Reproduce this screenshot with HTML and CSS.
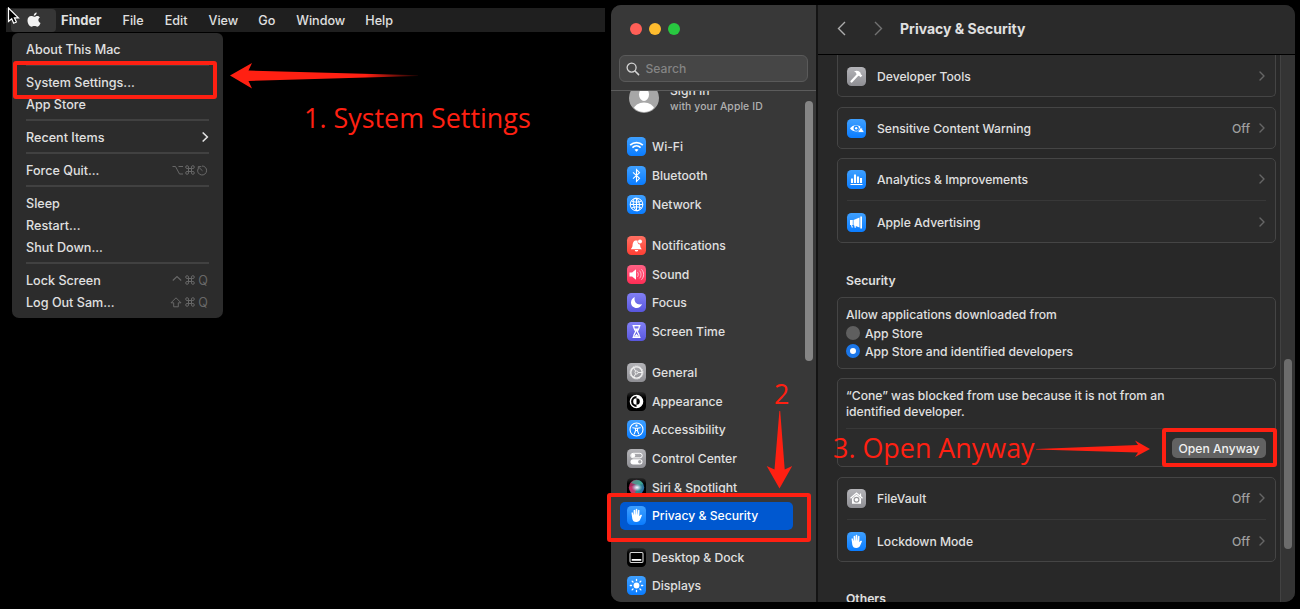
FILE: index.html
```html
<!DOCTYPE html>
<html lang="en">
<head>
<meta charset="utf-8">
<title>Open Anyway guide</title>
<link rel="stylesheet" href="styles.css">
</head>
<body>
<svg width="0" height="0" class="defs">
  <defs>
    <linearGradient id="fadeLeft" x1="0" x2="1" y1="0" y2="0"><stop offset=".72" stop-color="#ff2012"/><stop offset="1" stop-color="#ff2012" stop-opacity=".1"/></linearGradient>
    <symbol id="hand" viewBox="0 0 19 19"><path fill="#fff" d="M9.200 16c-2.200 0-3.600-1.300-3.900-3.300L4.500 7c-.1-1 1.100-1.200 1.400-.2l.7 2.500V4.600c0-1.100 1.500-1.100 1.600 0l.2 3.800h.2l.1-4.800c0-1.100 1.600-1.100 1.600 0l.1 4.800h.2l.4-3.900c.1-1.100 1.600-1 1.500.1l-.2 5.600 1-1.200c.8-.8 2.100-.2 1.500.8l-1.500 3.500c-.7 1.700-2 2.700-4.100 2.700z"/></symbol>
    <symbol id="chev" viewBox="0 0 6 10"><path d="M1 1l4 4-4 4" fill="none" stroke="currentColor" stroke-width="1.400" stroke-linecap="round" stroke-linejoin="round"/></symbol>
    <symbol id="cmd" viewBox="0 0 10 10"><path d="M3.500 3.500h3v3h-3zM3.500 3.500H2.100a1.400 1.400 0 1 1 1.400-1.400zM6.500 3.500V2.100a1.400 1.400 0 1 1 1.400 1.400zM6.500 6.500h1.400a1.400 1.400 0 1 1-1.400 1.400zM3.500 6.500v1.400a1.400 1.400 0 1 1-1.400-1.400z" fill="none" stroke="currentColor" stroke-width="1"/></symbol>
  </defs>
</svg>

<div class="stage">
  <div class="desktop">
    <header class="menubar">
      <div class="apple">
        <svg width="14" height="16" viewBox="0 0 14 16"><path fill="#f2f2f2" d="M9.700.5c.1 1.700-1.300 3.200-2.900 3.200C6.600 2.100 8.100.6 9.700.5zM12.900 5.500c-2.200 1.300-2 4.400.6 5.500-.5 1.500-1.700 3.700-3.100 3.700-1.100 0-1.600-.6-3-.6s-1.900.6-2.900.6C2.500 14.700.5 11.500.5 8.600c0-2.800 1.700-4.500 3.700-4.500 1.200 0 2.100.7 3 .7.8 0 1.900-.8 3.300-.8 1 0 1.900.6 2.400 1.500z"/></svg>
      </div>
      <span class="mb finder">Finder</span><span class="mb">File</span><span class="mb">Edit</span><span class="mb view">View</span><span class="mb">Go</span><span class="mb window-m">Window</span><span class="mb">Help</span>
    </header>
    <nav class="menu">
      <div class="item">About This Mac</div>
      <div class="sep"></div>
      <div class="item">System Settings...</div>
      <div class="item">App Store</div>
      <div class="sep"></div>
      <div class="item">Recent Items<svg class="sub" width="7" height="10"><path d="M1.200 1l4.200 4-4.200 4" fill="none" stroke="#e0e0e0" stroke-width="1.700" stroke-linecap="round" stroke-linejoin="round"/></svg></div>
      <div class="sep"></div>
      <div class="item">Force Quit...<span class="keys"><svg width="11" height="10"><path d="M.5 1.500h3l4 7.500H11M6.500 1.500H11" fill="none" stroke="currentColor"/></svg><svg width="10" height="10"><use href="#cmd"/></svg><svg width="11" height="11"><path d="M5 1a4.500 4.500 0 1 1-4.200 3.200M5.500 5.800L1.500 2M1.300 4.500V1.600h3" fill="none" stroke="currentColor"/></svg></span></div>
      <div class="sep"></div>
      <div class="item">Sleep</div>
      <div class="item">Restart...</div>
      <div class="item">Shut Down...</div>
      <div class="sep"></div>
      <div class="item">Lock Screen<span class="keys wide"><svg width="10" height="10"><path d="M.8 5.500l4.200-4 4.200 4" fill="none" stroke="currentColor" stroke-width="1.100"/></svg><svg width="10" height="10"><use href="#cmd"/></svg><span>Q</span></span></div>
      <div class="item">Log Out Sam...<span class="keys wide"><svg width="12" height="11"><path d="M6 .8l5 5H8.300v4H3.700v-4H1z" fill="none" stroke="currentColor" stroke-linejoin="round"/></svg><svg width="10" height="10"><use href="#cmd"/></svg><span>Q</span></span></div>
    </nav>
  </div>

  <div class="window">
    <aside class="sidebar">
      <div class="side-head">
        <div class="lights"><i class="red"></i><i class="yellow"></i><i class="green"></i></div>
        <div class="search"><svg width="14" height="14"><circle cx="5.600" cy="5.600" r="4.500" fill="none" stroke="#d4d4d4" stroke-width="1.300"/><path d="M9 9l3.600 3.600" stroke="#d4d4d4" stroke-width="1.500" stroke-linecap="round"/></svg><span>Search</span></div>
      </div>
      <div class="side-list">
        <div class="account">
          <svg width="30" height="30"><defs><clipPath id="av"><circle cx="15" cy="15" r="14"/></clipPath></defs><circle cx="15" cy="15" r="15" fill="#a7a7a7"/><g clip-path="url(#av)" fill="#fff"><ellipse cx="15" cy="11.500" rx="5" ry="6.500"/><ellipse cx="15" cy="26" rx="10" ry="6.500"/></g></svg>
          <div><div class="signin">Sign In</div><div class="with-id">with your Apple ID</div></div>
        </div>
        <div class="group">
          <div class="row"><svg class="ic blue" viewBox="0 0 19 19"><g fill="none" stroke="#fff" stroke-width="1.700"><path d="M3.200 8.200c3.600-3.400 9-3.400 12.600 0M5.400 10.600c2.400-2.200 5.800-2.200 8.200 0"/></g><path d="M7.500 12.700c1.200-1 2.800-1 4 0l-2 2z" fill="#fff"/></svg>Wi-Fi</div>
          <div class="row"><svg class="ic blue" viewBox="0 0 19 19"><path d="M6 6.300l6.500 6-3 3V3.700l3 3-6.500 6" fill="none" stroke="#fff" stroke-width="1.100"/></svg>Bluetooth</div>
          <div class="row"><svg class="ic blue" viewBox="0 0 19 19"><g fill="none" stroke="#fff" stroke-width="1"><circle cx="9.500" cy="9.500" r="6.300"/><ellipse cx="9.500" cy="9.500" rx="3" ry="6.300" transform="rotate(-12 9.500 9.500)"/><path d="M3.200 9.500h12.600M4.500 6c3 1.500 7 1.500 10 0M4.500 13c3-1.500 7-1.500 10 0M9.500 3.200v12.600"/></g></svg>Network</div>
        </div>
        <div class="group">
          <div class="row"><svg class="ic coral" viewBox="0 0 19 19"><path fill="#fff" d="M4 13.200c0-.8 1.300-1.500 1.500-3.200C5.700 6.500 6.500 4.500 9.500 4.500c.5 0 .8 0 1.200.2A2.900 2.900 0 0 0 13 8.500c.3 3 .7 3.500 2 4.700zM7.800 14h3.400c-.2 2-3.200 2-3.400 0z"/><circle cx="13" cy="5.500" r="2" fill="#fff"/></svg>Notifications</div>
          <div class="row"><svg class="ic pink" viewBox="0 0 19 19"><path fill="#fff" d="M2.500 7.500h2.600L9 4.300v10.400l-3.900-3.200H2.500z"/><path d="M10.500 7.200c1 1.200 1 3.400 0 4.600M12.500 5.700c2 2 2 5.600 0 7.600M14.500 4.300c2.800 3 2.800 7.400 0 10.400" fill="none" stroke="#ffd0dc" stroke-width=".9"/></svg>Sound</div>
          <div class="row"><svg class="ic indigo" viewBox="0 0 19 19"><path fill="#fff" d="M7.700 4c-1 5 2 8.200 7.300 7.300-1 2.400-3 3.700-5.300 3.700C6.500 15 4 12.700 4 9.500 4 7 5.500 4.900 7.700 4z"/></svg>Focus</div>
          <div class="row"><svg class="ic indigo" viewBox="0 0 19 19"><path d="M5.500 3.700h8M5.500 15.300h8M6.700 4c0 3.500 1.200 3.500 2 5.500-.8 2-2 2-2 5.500M12.300 4c0 3.500-1.200 3.500-2 5.500.8 2 2 2 2 5.500" fill="none" stroke="#fff" stroke-width="1.300"/><path d="M7.500 6.500h4l-2 3zM7.200 14.700l2.300-3 2.300 3z" fill="#fff"/></svg>Screen Time</div>
        </div>
        <div class="group">
          <div class="row"><svg class="ic gray" viewBox="0 0 19 19"><g fill="none" stroke="#f2f2f2"><circle cx="9.500" cy="9.500" r="5.700" stroke-width="1.300"/><circle cx="9.500" cy="9.500" r="6.500" stroke-width="1" stroke-dasharray="1 1"/><circle cx="9.500" cy="9.500" r="1.500"/><path d="M11 9.500h4M8.700 8.200L6.600 4.700M8.700 10.800l-2.100 3.500"/></g></svg>General</div>
          <div class="row"><svg class="ic black" viewBox="0 0 19 19"><circle cx="9.500" cy="9.500" r="6.100" fill="none" stroke="#fff" stroke-width="1.400"/><path d="M9.500 3.500a6 6 0 0 1 0 12v-2.700a3.300 3.300 0 0 0 0-6.600z" fill="#fff"/><path d="M9.500 6.200a3.300 3.300 0 0 0 0 6.600z" fill="#fff"/></svg>Appearance</div>
          <div class="row"><svg class="ic blue" viewBox="0 0 19 19"><circle cx="9.500" cy="9.500" r="6.500" fill="none" stroke="#fff" stroke-width="1.100"/><circle cx="9.500" cy="5.700" r="1.100" fill="#fff"/><path d="M5.800 7.700l2.500.6h2.400l2.500-.6M8.500 8.300v2.500l-1.200 3.100M10.500 8.300v2.500l1.200 3.100M8.500 10.500h2" fill="none" stroke="#fff" stroke-width="1.100" stroke-linecap="round"/></svg>Accessibility</div>
          <div class="row"><svg class="ic gray" viewBox="0 0 19 19"><rect x="3.800" y="4.300" width="11.400" height="4.600" rx="2.300" fill="none" stroke="#fff"/><circle cx="6.200" cy="6.600" r="2" fill="#fff"/><rect x="3.500" y="10.200" width="12" height="5.200" rx="2.600" fill="#fff"/><circle cx="12.800" cy="12.800" r="1.700" fill="#a5a5a8"/></svg>Control Center</div>
          <div class="row"><svg class="ic black" viewBox="0 0 19 19"><defs><radialGradient id="siri"><stop offset="0" stop-color="#fff"/><stop offset=".4" stop-color="#c9d3ea" stop-opacity=".8"/><stop offset="1" stop-color="#7cc0d0" stop-opacity="0"/></radialGradient><linearGradient id="orb" x1="0" x2="1" y1=".3" y2=".7"><stop offset="0" stop-color="#b8204f"/><stop offset=".35" stop-color="#8a3f70"/><stop offset=".6" stop-color="#2f8f86"/><stop offset="1" stop-color="#2a62a8"/></linearGradient></defs><circle cx="9.500" cy="9.500" r="7.700" fill="url(#orb)"/><path d="M4 5c3-4 9-4 12 1l-5 1z" fill="#45a894" opacity=".8"/><path d="M2.500 9c3-2 5-1 7 2l-2 5C4 15 2 12 2.500 9z" fill="#e0336b" opacity=".7"/><ellipse cx="10" cy="9.500" rx="5.500" ry="4" fill="url(#siri)"/></svg>Siri &amp; Spotlight</div>
          <div class="row selected"><svg class="ic blue" viewBox="0 0 19 19"><use href="#hand"/></svg>Privacy &amp; Security</div>
        </div>
        <div class="group">
          <div class="row"><svg class="ic black" viewBox="0 0 19 19"><rect x="3" y="4.500" width="13" height="10" rx="1.200" fill="none" stroke="#d8d8d8" stroke-width="1.100"/><rect x="4.700" y="11" width="9.600" height="1.800" fill="#fff"/></svg>Desktop &amp; Dock</div>
          <div class="row"><svg class="ic blue" viewBox="0 0 19 19"><circle cx="9.500" cy="9.500" r="2.900" fill="#fff"/><g stroke="#fff" stroke-width="1.300" stroke-linecap="round"><path d="M9.500 3.300v1.200M9.500 14.500v1.200M3.300 9.500h1.200M14.500 9.500h1.200M5.100 5.100l.9.900M13 13l.9.900M5.100 13.900L6 13M13 6l.9-.9"/></g></svg>Displays</div>
        </div>
        <div class="side-thumb"></div>
      </div>
    </aside>

    <main class="main">
      <div class="titlebar">
        <svg width="9" height="15"><path d="M8 1L1.500 7.500 8 14" fill="none" stroke="#adadad" stroke-width="1.400"/></svg>
        <svg class="fwd" width="9" height="15"><path d="M1 1l6.500 6.500L1 14" fill="none" stroke="#727272" stroke-width="1.400"/></svg>
        <h1>Privacy &amp; Security</h1>
      </div>
      <div class="body">
        <div class="content">
          <section class="card first"><div class="line"><svg class="ic gray" viewBox="0 0 19 19"><path d="M4.500 14.500l6.500-7" stroke="#fff" stroke-width="2.200" stroke-linecap="round"/><path d="M7 4.500c3-1.500 5-.5 6.500 1.300l.3 1.400 1.500 1.300-1.600 1.800-1.700-1.600-1.200-.2-1.500-1.500c.2-1.200-.6-2-2.300-2.500z" fill="#fff"/></svg><span>Developer Tools</span><svg class="chev" viewBox="0 0 6 10"><use href="#chev"/></svg></div></section>
          <section class="card tight"><div class="line"><svg class="ic blue" viewBox="0 0 19 19"><path d="M3 9.500C5.500 5 12.500 5 15.500 9.500c-3 4-9.500 4-12.500 0z" fill="#fff"/><circle cx="9.200" cy="9.200" r="2.600" fill="#1687ff"/><circle cx="9.200" cy="9.200" r="1.200" fill="#fff"/><path d="M14 7.800l3.500 5.700h-7z" fill="#fff" stroke="#1687ff" stroke-width=".8"/></svg><span>Sensitive Content Warning</span><em>Off</em><svg class="chev" viewBox="0 0 6 10"><use href="#chev"/></svg></div></section>
          <section class="card">
            <div class="line"><svg class="ic blue" viewBox="0 0 19 19"><path d="M3.500 14.500h12" stroke="#fff" stroke-width="1.200"/><path d="M5 13V8.500M8 13V4.500M11 13V6.500M14 13V8" stroke="#fff" stroke-width="2.100"/></svg><span>Analytics &amp; Improvements</span><svg class="chev" viewBox="0 0 6 10"><use href="#chev"/></svg></div>
            <hr>
            <div class="line"><svg class="ic blue" viewBox="0 0 19 19"><path fill="#fff" d="M3 7h2.800v5H5l1 2.500H4.700L4 12H3zM6.500 7l6-2.500v10L8.700 13l.3 1.500-1.200.5-.6-2.400-.7-.5zM13.300 3.500h1.700v12h-1.700z"/></svg><span>Apple Advertising</span><svg class="chev" viewBox="0 0 6 10"><use href="#chev"/></svg></div>
          </section>
          <h2>Security</h2>
          <section class="card allow">
            <p>Allow applications downloaded from</p>
            <div class="radio"><i></i>App Store</div>
            <div class="radio on"><i></i>App Store and identified developers</div>
          </section>
          <section class="card blocked">
            <p>“Cone” was blocked from use because it is not from an<br>identified developer.</p>
            <hr>
            <div class="action"><button>Open Anyway</button></div>
          </section>
          <section class="card">
            <div class="line"><svg class="ic gray" viewBox="0 0 19 19"><path d="M3.500 9.300l6-5.300 6 5.300M13.500 4.500v3" fill="none" stroke="#fff" stroke-width="1.200"/><path d="M5 9.500l4.500-4 4.500 4v5.300H5z" fill="#fff"/><circle cx="9.500" cy="10.700" r="2.400" fill="none" stroke="#99999c" stroke-width="1.200"/></svg><span>FileVault</span><em>Off</em><svg class="chev" viewBox="0 0 6 10"><use href="#chev"/></svg></div>
            <hr>
            <div class="line"><svg class="ic blue" viewBox="0 0 19 19"><use href="#hand"/></svg><span>Lockdown Mode</span><em>Off</em><svg class="chev" viewBox="0 0 6 10"><use href="#chev"/></svg></div>
          </section>
          <h2 class="others">Others</h2>
        </div>
        <div class="track"><div class="thumb"></div></div>
      </div>
    </main>
  </div>

  <svg class="overlay cursor" width="14" height="20"><path d="M1.500 1v13.500l3.200-2.800 2 4.500 2.700-1.200-2-4.200h4z" fill="#000" stroke="#fff" stroke-width="1.200"/></svg>
  <div class="overlay box box-settings"></div>
  <div class="overlay box box-privacy"></div>
  <div class="overlay box box-open"></div>
  <svg class="overlay arrow1" width="188" height="28"><path d="M0 13.500L22 1l-3.500 7.500L188 13.200v.8L18.500 19 22 26.500z" fill="url(#fadeLeft)"/></svg>
  <svg class="overlay arrow2" width="28" height="82"><path d="M13.400 0h.8l4.500 58.500 7.500-3.500L13.500 77.500 .7 55l7.800 3.500z" fill="#ff2012"/></svg>
  <svg class="overlay arrow3" width="114" height="18"><path d="M0 9.100L102 5l-3-4.500L114 9 99 17l3-4.500L0 9.600z" fill="#ff2012"/></svg>
  <div class="overlay note note1">1. System Settings</div>
  <div class="overlay note note2">2</div>
  <div class="overlay note note3">3. Open Anyway</div>
</div>
</body>
</html>
```
FILE: styles.css
```css
* { box-sizing: border-box; }
body { margin: 0; background: #000; font-family: Inter, "Liberation Sans", sans-serif; color: #e0e0e0; }
.defs { position: absolute; }
.stage { position: relative; display: flex; width: 1300px; height: 609px; overflow: hidden; background: #000; }

.desktop { width: 599px; margin: 8px 6px 0 6px; }
.menubar { display: flex; align-items: center; height: 24px; background: #1f1f1f; font-size: 12.600px; font-weight: 500; }
.apple { display: flex; align-items: center; justify-content: center; width: 45px; height: 23px; margin: 0 5px 0 5px; background: #363636; border-radius: 4px; }
.mb { margin-right: 21px; }
.finder { font-weight: 700; font-size: 13px; }
.view { margin-right: 20px; }
.window-m { margin-right: 20px; }
.menu { width: 211px; height: 285px; margin: 1px 0 0 6px; padding: 5px 14px; background: #2c2c2c; border-radius: 6px 6px 7px 7px; font-size: 12.600px; font-weight: 500; }
.item { display: flex; align-items: center; height: 22px; white-space: nowrap; }
.sub { margin-left: auto; }
.keys { display: flex; align-items: center; gap: 2px; margin-left: auto; margin-right: 1px; color: #686868; font-weight: 400; }
.keys.wide { gap: 3px; }
.sep { height: 11px; padding-top: 4px; }
.sep::before { content: ""; display: block; height: 2px; background: #414141; }

.window { display: flex; width: 684px; height: 597px; margin-top: 5px; border-radius: 10px; overflow: hidden; background: #282828; font-size: 12.150px; font-weight: 500; }
.sidebar { width: 207px; flex: none; display: flex; flex-direction: column; background: #383838; border-right: 2px solid #141414; }
.side-head { height: 86px; border-bottom: 1px solid #5c5c5c; flex: none; }
.lights { display: flex; gap: 7px; padding: 18px 0 0 19px; }
.lights i { width: 12px; height: 12px; border-radius: 50%; }
.red { background: #ff5f57; }
.yellow { background: #febc2e; }
.green { background: #28c840; }
.search { display: flex; align-items: center; gap: 6px; width: 189px; height: 27px; margin: 20px 0 0 8px; padding-left: 5.500px; border: 1px solid #5a5a5a; border-radius: 6px; background: #464646; color: #848484; font-size: 12.150px; }
.side-list { position: relative; flex: 1; min-height: 0; overflow: hidden; }
.account { display: flex; gap: 11px; height: 30px; margin: -8px 0 19.500px 18px; }
.account svg { flex: none; }
.signin { line-height: 16px; }
.with-id { font-size: 10.400px; line-height: 16px; color: #b0b0b0; letter-spacing: .1px; }
.group { margin: 0 0 12.450px 9px; }
.row { display: flex; align-items: center; gap: 6px; width: 173px; height: 28.700px; padding-left: 7px; white-space: nowrap; }
.selected { background: #0058d0; border-radius: 5px; color: #fff; }
.ic { width: 19px; height: 19px; flex: none; border-radius: 4.500px; }
.blue { background: linear-gradient(#3fa0ff, #0a7cff); }
.coral { background: linear-gradient(#ff7062, #ff3f34); }
.pink { background: linear-gradient(#ff6285, #ff2d55); }
.indigo { background: linear-gradient(#8280f5, #5856dd); }
.gray { background: linear-gradient(#b4b4b8, #8e8e93); }
.black { background: linear-gradient(#2a2a2a, #000 30%); }
.side-thumb { position: absolute; right: 3px; top: 10px; width: 8px; height: 260px; border-radius: 4px; background: #858585; }

.main { flex: 1; display: flex; flex-direction: column; min-width: 0; }
.titlebar { display: flex; align-items: center; height: 50px; padding: 0 0 2px 19px; border-bottom: 1px solid #000; background: #2a2a2a; flex: none; }
.fwd { margin-left: 28px; }
h1 { margin: 0 0 0 17px; font-size: 14px; line-height: 18px; font-weight: 700; }
.body { flex: 1; display: flex; min-height: 0; overflow: hidden; }
.content { width: 458px; padding: 0 0 0 19px; }
.card { display: flex; flex-direction: column; width: 439px; margin-bottom: 10px; padding: 0 9px; border: 1px solid #454545; border-radius: 5px; background: #2b2b2b; }
.card.first { border-top: 0; border-radius: 0 0 5px 5px; }
.card.tight { margin-bottom: 9px; }
.line { display: flex; align-items: center; height: 40px; }
.first .line { height: 41px; padding-top: 1px; }
.line span { margin-left: 11px; margin-right: auto; }
.line em { font-style: normal; color: #a0a0a0; margin-right: 9px; }
.chev { width: 6px; height: 10px; margin-right: 1px; color: #666; }
hr { width: 100%; height: 1px; margin: 1px 0; border: 0; background: #383838; flex: none; }
h2 { margin: 0 0 9px 9px; padding-top: 20px; font-size: 12.200px; line-height: 15px; font-weight: 600; }
.allow { height: 72px; padding: 8px 8px; margin-bottom: 9px; }
p { margin: 0; line-height: 18px; }
.radio { display: flex; align-items: center; gap: 5px; height: 18.500px; }
.allow p { height: 18.500px; }
.radio i { width: 14px; height: 14px; border-radius: 50%; background: #5f5f5f; }
.radio.on i { border: 4px solid #1b76e8; background: #fff; }
.blocked { height: 89px; padding: 9px 8px 0; }
.blocked p { line-height: 15.500px; height: 39px; }
.action { display: flex; justify-content: flex-end; padding: 8px 1px 0 0; }
button { width: 94px; height: 20px; padding: 0; border: 0; border-radius: 5px; background: #626262; color: #f0f0f0; font: 500 12.150px Inter, sans-serif; }
.others { padding-top: 18.500px; }
.track { margin-left: auto; width: 15px; border-left: 1px solid #424242; background: #343434; padding: 304px 0 0 3px; }
.thumb { width: 8px; height: 190px; border-radius: 4px; background: #6c6c6c; }

.overlay { position: absolute; }
.cursor { left: 7px; top: 7px; }
.box { border: 4px solid #ff2012; border-radius: 3px; }
.box-settings { left: 13px; top: 61px; width: 204px; height: 38px; }
.box-privacy { left: 607px; top: 493px; width: 204px; height: 49px; }
.box-open { left: 1162px; top: 428px; width: 115px; height: 39px; }
.arrow1 { left: 230px; top: 62px; }
.arrow2 { left: 766px; top: 411px; }
.arrow3 { left: 1036px; top: 440px; }
.note { color: #ff2012; font: 400 26.900px/36px "Open Sans", "Noto Sans", sans-serif; white-space: nowrap; }
.note1 { left: 304px; top: 100px; }
.note2 { left: 774px; top: 376px; }
.note3 { left: 833px; top: 430px; }
```
